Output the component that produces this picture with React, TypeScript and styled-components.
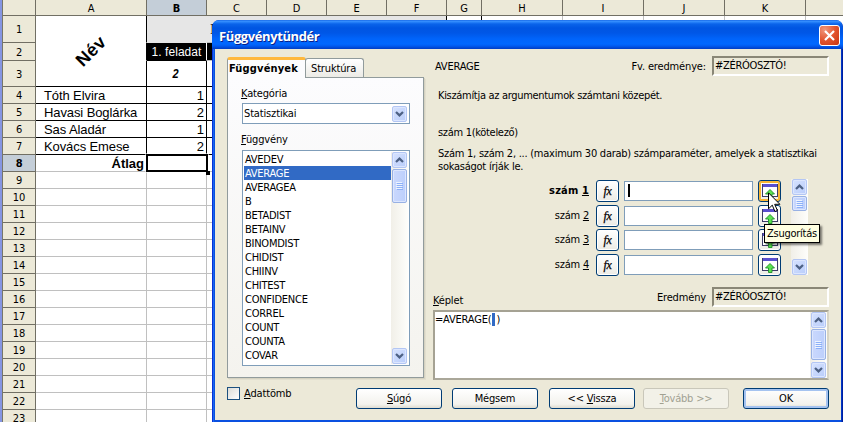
import React from "react";
import styled, { createGlobalStyle, css } from "styled-components";

const Global = createGlobalStyle`
  *, *::before, *::after { box-sizing: border-box; }
  body { margin: 0; background: #fff; overflow: hidden; }
`;

const ui = `"DejaVu Sans Condensed", "DejaVu Sans", sans-serif`;

const Screen = styled.div`
  position: relative;
  width: 843px;
  height: 422px;
  overflow: hidden;
  background: #fff;
  font: 11px/14px ${ui};
  font-stretch: condensed;
  letter-spacing: -0.15px;
  color: #000;
  white-space: nowrap;
`;

/* ---------- Spreadsheet ---------- */

const Sheet = styled.div`
  width: 900px;
  border-left: 2px solid #8595e2;
  box-shadow: inset 1px 0 #77776a;
  padding-left: 1px;
`;

const SheetRow = styled.div<{ $h: number }>`
  display: flex;
  height: ${(p) => p.$h}px;
`;

const Head = styled.div<{ $w: number; $on?: boolean; $top?: boolean }>`
  flex: none;
  display: flex;
  align-items: center;
  justify-content: center;
  width: ${(p) => p.$w}px;
  padding-top: ${(p) => (p.$top ? 3 : 2)}px;
  border-right: 1px solid #716f64;
  border-bottom: 1px solid #716f64;
  background: ${(p) => (p.$on ? "#c4ced8" : "#ece9d8")};
  font-weight: ${(p) => (p.$on ? 700 : 400)};
`;

const Cell = styled.div<{
  $w: number;
  $bg?: string;
  $right?: string;
  $bottom?: string;
  $align?: string;
  $bold?: boolean;
}>`
  flex: none;
  display: flex;
  align-items: center;
  justify-content: ${(p) => p.$align ?? "flex-start"};
  width: ${(p) => p.$w}px;
  padding-right: ${(p) => (p.$align === "flex-end" ? 2 : 0)}px;
  border-right: 1px solid ${(p) => p.$right ?? "#c0c0c0"};
  border-bottom: 1px solid ${(p) => p.$bottom ?? "#c0c0c0"};
  background: ${(p) => p.$bg ?? "#fff"};
  color: ${(p) => (p.$bg === "#000" ? "#fff" : "#000")};
  font: ${(p) => (p.$bold ? 700 : 400)} 13px/15px "Liberation Sans", Arial, sans-serif;
  letter-spacing: 0;
`;

const NameText = styled.span`
  padding-left: 8px;
  letter-spacing: -0.1px;
`;
const HeadText = styled.span`
  font-size: 12px;
  padding-top: 2px;
  letter-spacing: 0.05px;
`;
const Weight = styled.span`
  padding-right: 1px;
  font: italic 700 13px "Liberation Sans", sans-serif;
  transform: scaleX(0.85);
`;
const Serif = styled.span`
  padding: 0 0 0 3px;
  font: 15px "Liberation Serif", serif;
`;
const Rotated = styled.span`
  position: absolute;
  left: 70px;
  top: 40px;
  width: 42px;
  text-align: center;
  font: 700 18px/22px "Liberation Sans", Arial, sans-serif;
  letter-spacing: 0.5px;
  transform: rotate(-45deg);
`;
const Selection = styled.div`
  position: absolute;
  left: 146px;
  top: 154px;
  width: 62px;
  height: 18px;
  border: 2px solid #000;
  outline: 1px solid rgba(255, 255, 255, 0.55);
  &::after {
    content: "";
    position: absolute;
    right: -4px;
    bottom: -5px;
    width: 4px;
    height: 4px;
    background: #000;
  }
`;

/* ---------- Dialog frame ---------- */

const Dialog = styled.section`
  position: absolute;
  left: 212px;
  top: 20px;
  width: 631px;
  height: 402px;
  display: flex;
  flex-direction: column;
  border-radius: 7px 7px 0 0;
  overflow: hidden;
  background: linear-gradient(90deg, #0831d9 0 1px, #1767ee 1px 2px, #0a50e0 2px 628px, #0050e8 629px, #001ea0 630px);
`;

const TitleBar = styled.header`
  display: flex;
  align-items: center;
  justify-content: space-between;
  height: 29px;
  flex: none;
  padding: 2px 3px 0 7px;
  border-radius: 7px 7px 0 0;
  background: linear-gradient(
    180deg,
    #0a5be0 0,
    #3c93ff 1px,
    #2a85fb 2px,
    #0a63ea 4px,
    #0055e2 8px,
    #0057e7 13px,
    #0064fb 19px,
    #0068ff 24px,
    #005bf0 26px,
    #0046d2 28px,
    #003ec4 29px
  );
`;
const Title = styled.h1`
  margin: 0;
  color: #fff;
  font: 700 13px/20px "Open Sans", sans-serif;
  letter-spacing: -0.4px;
  text-shadow: 1px 1px #0a1f8a;
`;
const CloseButton = styled.button`
  display: grid;
  place-items: center;
  width: 21px;
  height: 21px;
  padding: 0;
  border: 1px solid #fff;
  border-radius: 3px;
  background: radial-gradient(circle at 25% 20%, #f0977c, #e2552f 50%, #c93410);
`;
const Body = styled.div`
  flex: 1;
  margin: 0 2px 2px 3px;
  background: #ece9d8;
`;
const Columns = styled.div`
  display: flex;
  height: 332px;
`;

/* ---------- Left column ---------- */

const Left = styled.div`
  flex: none;
  width: 197px;
  margin: 8px 0 0 12px;
`;
const Tabs = styled.div`
  display: flex;
  align-items: flex-end;
  height: 21px;
  margin-bottom: -1px;
  position: relative;
`;
const Tab = styled.div<{ $active?: boolean }>`
  border: 1px solid #919b9c;
  border-bottom: 0;
  border-radius: 3px 3px 0 0;
  ${(p) =>
    p.$active
      ? css`
          width: 79px;
          height: 21px;
          padding: 2px 0 0 1px;
          border-top: 3px solid #ffb83c;
          background: #fcfcfe;
          font-weight: 700;
          letter-spacing: 0.15px;
        `
      : css`
          width: 59px;
          height: 19px;
          margin-left: -1px;
          margin-bottom: 1px;
          padding: 3px 0 0 5px;
          background: linear-gradient(#fff, #ecebe6);
        `}
`;
const TabPanel = styled.div`
  height: 301px;
  padding: 9px 0 0 14px;
  border: 1px solid #919b9c;
  background: linear-gradient(#fcfcfe, #f4f3ee);
  box-shadow: 1px 1px #d5d2c1, 2px 2px #e2dfcf;
`;
const FieldLabel = styled.div<{ $gap?: number }>`
  height: 14px;
  margin-top: ${(p) => p.$gap ?? 0}px;
  margin-left: -1px;
`;
const Select = styled.div`
  display: flex;
  align-items: center;
  justify-content: space-between;
  width: 168px;
  height: 21px;
  margin-top: 2px;
  padding: 1px 2px 1px 1px;
  border: 1px solid #7f9db9;
  background: #fff;
`;
const List = styled.div`
  display: flex;
  width: 168px;
  height: 216px;
  margin-top: 3px;
  padding: 1px;
  border: 1px solid #7f9db9;
  background: #fff;
`;
const Items = styled.div`
  flex: 1;
`;
const Item = styled.div<{ $on?: boolean }>`
  height: 14px;
  padding-left: 1px;
  line-height: 15px;
  letter-spacing: -0.25px;
  background: ${(p) => (p.$on ? "#316ac5" : "transparent")};
  color: ${(p) => (p.$on ? "#fff" : "#000")};
`;

/* ---------- Scroll bar ---------- */

const Track = styled.div`
  display: flex;
  flex-direction: column;
  justify-content: space-between;
  width: 17px;
  height: 100%;
  padding: 0 1px;
  background: linear-gradient(90deg, #f1efe8, #fefefb);
`;
const blue = css`
  display: grid;
  place-items: center;
  border: 1px solid #b3c6f4;
  border-radius: 2px;
  box-shadow: inset 0 0 0 1px #dce6fe;
  background: linear-gradient(135deg, #d6e2fe, #b9cdfb);
`;
const Arrow = styled.div`
  ${blue}
  flex: none;
  width: 15px;
  height: 16px;
`;
const Thumb = styled.div<{ $h: number }>`
  ${blue}
  height: ${(p) => p.$h}px;
  margin-top: 1px;
  border-color: #98b1e4;
  background: linear-gradient(90deg, #cad8fd, #bccffc);
`;

const Chevron = ({ up }: { up?: boolean }) => (
  <svg width="9" height="6" viewBox="0 0 9 6">
    <path d={up ? "M1 5 4.5 1.6 8 5" : "M1 1 4.5 4.4 8 1"} fill="none" stroke="#4d6185" strokeWidth="2.2" />
  </svg>
);

const Grip = () => (
  <svg width="7" height="8" viewBox="0 0 7 8" shapeRendering="crispEdges">
    <path d="M0 .5h6M0 2.5h6M0 4.5h6M0 6.5h6" stroke="#eef4fe" />
    <path d="M1 1.5h6M1 3.5h6M1 5.5h6M1 7.5h6" stroke="#8cb0f8" />
  </svg>
);

const ScrollBar = ({ thumb }: { thumb: number }) => (
  <Track>
    <div>
      <Arrow>
        <Chevron up />
      </Arrow>
      <Thumb $h={thumb}>
        <Grip />
      </Thumb>
    </div>
    <Arrow>
      <Chevron />
    </Arrow>
  </Track>
);

/* ---------- Right column ---------- */

const Right = styled.div`
  width: 396px;
  margin: 7px 0 0 9px;
`;
const ResultLine = styled.div<{ $gap?: number }>`
  display: flex;
  align-items: center;
  height: 20px;
  margin-top: ${(p) => p.$gap ?? 0}px;
`;
const ResultLabel = styled.span`
  margin: 1px 6px 0 auto;
`;
const Result = styled.div`
  width: 117px;
  height: 20px;
  padding: 1px 0 0 1px;
  border: 2px solid;
  border-color: #8a8777 #fff #fff #8a8777;
  letter-spacing: -0.3px;
`;
const FunctionName = styled.span`
  padding: 1px 0 0 2px;
  letter-spacing: -0.2px;
`;
const FormulaLabel = styled.span`
  margin-top: 7px;
`;
const Text = styled.p<{ $gap: number; $ls?: number }>`
  margin: ${(p) => p.$gap}px 0 0 5px;
  line-height: 13px;
  letter-spacing: ${(p) => p.$ls ?? -0.25}px;
`;
const Arguments = styled.div`
  display: flex;
  height: 96px;
  margin-top: 6px;
`;
const ArgumentRows = styled.div`
  display: grid;
  grid-template-rows: 25px 24px 25px 22px;
  align-items: start;
  width: 348px;
  margin: 1px 10px 0 0;
`;
const Argument = styled.div`
  display: flex;
  height: 22px;
`;
const ArgumentName = styled.span<{ $bold?: boolean }>`
  width: 156px;
  margin: 4px 7px 0 0;
  text-align: right;
  font-weight: ${(p) => (p.$bold ? 700 : 400)};
  letter-spacing: ${(p) => (p.$bold ? 0.15 : -0.2)}px;
`;
const SquareButton = styled.button<{ $hot?: boolean }>`
  display: grid;
  place-items: center;
  flex: none;
  width: 23px;
  height: 22px;
  padding: 0;
  border: 1px solid #003c74;
  border-radius: 3px;
  background: linear-gradient(#fff, #ecebe5);
  box-shadow: ${(p) => (p.$hot ? "inset 0 0 0 2px #f8b636" : "inset 0 0 0 1px #fff")};
  color: #000;
  font: italic 12px/12px "Liberation Serif", serif;
  letter-spacing: -0.3px;
  -webkit-text-stroke: 0.25px #000;
`;
const Input = styled.div`
  width: 129px;
  height: 20px;
  margin: 1px 5px 0;
  padding: 2px 0 0 3px;
  border: 1px solid #7f9db9;
  background: #fff;
`;
const Caret = styled.div`
  width: 2px;
  height: 13px;
  background: #000;
`;
const FormulaBox = styled.div`
  display: flex;
  justify-content: space-between;
  height: 70px;
  margin-top: 3px;
  border: 2px solid;
  border-color: #a5a293 #d8d5c5 #aaa799 #a5a293;
  background: #fff;
`;
const Formula = styled.div`
  display: flex;
  padding-top: 1px;
  letter-spacing: -0.2px;
`;
const Mark = styled.span`
  width: 3px;
  height: 13px;
  margin: 0 1px;
  background: #316ac5;
`;

/* ---------- Footer ---------- */

const Footer = styled.footer`
  display: flex;
  height: 28px;
  padding: 6px 0 0 12px;
`;
const CheckBox = styled.div`
  width: 13px;
  height: 13px;
  border: 1px solid #1c5180;
  background: linear-gradient(135deg, #dcdcd7, #fff);
`;
const CheckLabel = styled.span`
  width: 112px;
  margin-left: 4px;
`;
const Button = styled.button<{ $gap?: number; $disabled?: boolean; $primary?: boolean }>`
  flex: none;
  width: 86px;
  height: 21px;
  margin: 1px 0 0 ${(p) => p.$gap ?? 0}px;
  padding: 0;
  border: 1px solid ${(p) => (p.$disabled ? "#c9c7ba" : "#003c74")};
  border-radius: 3px;
  background: ${(p) => (p.$disabled ? "#f2f1e8" : "linear-gradient(#fff, #f3f2ed 80%, #dfdcd0)")};
  box-shadow: ${(p) => (p.$primary ? "inset 0 0 0 2px #a5c3f0" : "none")};
  color: ${(p) => (p.$disabled ? "#a1a192" : "#000")};
  font: 11px/14px ${ui};
  font-stretch: condensed;
  letter-spacing: -0.2px;
`;

/* ---------- Overlays ---------- */

const Tooltip = styled.div`
  position: absolute;
  left: 764px;
  top: 224px;
  width: 56px;
  height: 19px;
  padding: 2px 0 0 2px;
  border: 1px solid #000;
  background: #ffffe1;
  box-shadow: 2px 2px 2px rgba(0, 0, 0, 0.5);
  letter-spacing: -0.25px;
`;
const Pointer = styled.svg`
  position: absolute;
  left: 768px;
  top: 192px;
`;

const ShrinkIcon = () => (
  <svg width="16" height="16" viewBox="0 0 16 16" shapeRendering="crispEdges">
    <path d="M.5 1.5h15v12H.5z" fill="#fff" stroke="#3c3c66" />
    <path d="M1 1h14v3H1z" fill="#5a4fcf" />
    <path
      d="M8 6.5 12.500 11H10v4.500H6.500V11H3.500z"
      fill="#5be34f"
      stroke="#1f8c2a"
      strokeWidth=".9"
      shapeRendering="auto"
    />
  </svg>
);

const columns: [string, number][] = [
  ["C", 60],
  ["D", 60],
  ["E", 60],
  ["F", 60],
  ["G", 35],
  ["H", 81],
  ["I", 81],
  ["J", 81],
  ["K", 81],
  ["", 81],
];
const people: [string, number][] = [
  ["Tóth Elvira", 1],
  ["Havasi Boglárka", 2],
  ["Sas Aladár", 1],
  ["Kovács Emese", 2],
];
const functions = [
  "AVEDEV", "AVERAGE", "AVERAGEA", "B", "BETADIST", "BETAINV", "BINOMDIST", "CHIDIST",
  "CHIINV", "CHITEST", "CONFIDENCE", "CORREL", "COUNT", "COUNTA", "COVAR",
];
const emptyRows = Array.from({ length: 15 }, (_, i) => i + 9);

const Spreadsheet = () => (
  <Sheet>
    <SheetRow $h={16}>
      <Head $w={33} />
      <Head $w={111} $top>A</Head>
      <Head $w={60} $top $on>B</Head>
      {columns.map(([name, w]) => (
        <Head key={name} $w={w} $top>{name}</Head>
      ))}
    </SheetRow>
    <SheetRow $h={27}>
      <Head $w={33}>1</Head>
      <Cell $w={111} $right="#000" $bottom="#fff" />
      <Cell $w={60} $bg="#e6e6e6" $right="#e6e6e6" $bottom="#e6e6e6" />
      <Cell $w={240} $bg="#e6e6e6" $right="#000"><Serif>I</Serif></Cell>
      <Cell $w={35} $right="#000" />
      {columns.slice(5).map(([name, w]) => <Cell key={name} $w={w} />)}
    </SheetRow>
    <SheetRow $h={18}>
      <Head $w={33}>2</Head>
      <Cell $w={111} $right="#000" $bottom="#fff" />
      <Cell $w={60} $bg="#000" $right="#fff" $bottom="#000" $align="center"><HeadText>1. feladat</HeadText></Cell>
      <Cell $w={60} $bg="#000" />
    </SheetRow>
    <SheetRow $h={26}>
      <Head $w={33}>3</Head>
      <Cell $w={111} $right="#000" $bottom="#000" />
      <Cell $w={60} $right="#000" $bottom="#000" $align="center"><Weight>2</Weight></Cell>
      <Cell $w={60} $bottom="#000" />
    </SheetRow>
    {people.map(([name, value], i) => (
      <SheetRow $h={17} key={name}>
        <Head $w={33}>{i + 4}</Head>
        <Cell $w={111} $right="#000" $bottom="#000"><NameText>{name}</NameText></Cell>
        <Cell $w={60} $right="#000" $bottom="#000" $align="flex-end">{value}</Cell>
        <Cell $w={60} $bottom="#000" />
      </SheetRow>
    ))}
    <SheetRow $h={17}>
      <Head $w={33} $on>8</Head>
      <Cell $w={111} $align="flex-end" $bold>Átlag</Cell>
      <Cell $w={60} />
      <Cell $w={60} />
    </SheetRow>
    {emptyRows.map((n) => (
      <SheetRow $h={17} key={n}>
        <Head $w={33}>{n}</Head>
        <Cell $w={111} />
        <Cell $w={60} />
        <Cell $w={60} />
      </SheetRow>
    ))}
    <Rotated>Név</Rotated>
    <Selection />
  </Sheet>
);

export default function App() {
  return (
    <Screen>
      <Global />
      <Spreadsheet />
      <Dialog>
        <TitleBar>
          <Title>Függvénytündér</Title>
          <CloseButton>
            <svg width="13" height="13" viewBox="0 0 13 13">
              <path d="M2 2l9 9M11 2l-9 9" stroke="#fff" strokeWidth="2.2" />
            </svg>
          </CloseButton>
        </TitleBar>
        <Body>
          <Columns>
            <Left>
              <Tabs>
                <Tab $active>Függvények</Tab>
                <Tab>Struktúra</Tab>
              </Tabs>
              <TabPanel>
                <FieldLabel><u>K</u>ategória</FieldLabel>
                <Select>
                  Statisztikai
                  <Arrow><Chevron /></Arrow>
                </Select>
                <FieldLabel $gap={9}><u>F</u>üggvény</FieldLabel>
                <List>
                  <Items>
                    {functions.map((f) => (
                      <Item key={f} $on={f === "AVERAGE"}>{f}</Item>
                    ))}
                  </Items>
                  <ScrollBar thumb={34} />
                </List>
              </TabPanel>
            </Left>
            <Right>
              <ResultLine>
                <FunctionName>AVERAGE</FunctionName>
                <ResultLabel>Fv. eredménye:</ResultLabel>
                <Result>#ZÉRÓOSZTÓ!</Result>
              </ResultLine>
              <Text $gap={13} $ls={-0.31}>Kiszámítja az argumentumok számtani közepét.</Text>
              <Text $gap={24} $ls={-0.3}>szám 1(kötelező)</Text>
              <Text $gap={8}>
                Szám 1, szám 2, ... (maximum 30 darab) számparaméter, amelyek a statisztikai
                <br />
                sokaságot írják le.
              </Text>
              <Arguments>
                <ArgumentRows>
                  {[1, 2, 3, 4].map((n) => (
                    <Argument key={n}>
                      <ArgumentName $bold={n === 1}>szám <u>{n}</u></ArgumentName>
                      <SquareButton>fx</SquareButton>
                      <Input>{n === 1 && <Caret />}</Input>
                      <SquareButton $hot={n === 1}><ShrinkIcon /></SquareButton>
                    </Argument>
                  ))}
                </ArgumentRows>
                <ScrollBar thumb={15} />
              </Arguments>
              <ResultLine $gap={12}>
                <FormulaLabel><u>K</u>éplet</FormulaLabel>
                <ResultLabel>Eredmény</ResultLabel>
                <Result>#ZÉRÓOSZTÓ!</Result>
              </ResultLine>
              <FormulaBox>
                <Formula>=AVERAGE(<Mark />)</Formula>
                <ScrollBar thumb={31} />
              </FormulaBox>
            </Right>
          </Columns>
          <Footer>
            <CheckBox />
            <CheckLabel><u>A</u>dattömb</CheckLabel>
            <Button><u>S</u>úgó</Button>
            <Button $gap={10}>Mégsem</Button>
            <Button $gap={11}>&lt;&lt; <u>V</u>issza</Button>
            <Button $gap={8} $disabled><u>T</u>ovább &gt;&gt;</Button>
            <Button $gap={14} $primary>OK</Button>
          </Footer>
        </Body>
      </Dialog>
      <Tooltip>Zsugorítás</Tooltip>
      <Pointer width="13" height="21" viewBox="0 0 13 21">
        <path d="M.5.8v16l3.800-3.600 2.600 6.300 2.500-1-2.700-6.200h5.200z" fill="#fff" stroke="#000" />
      </Pointer>
    </Screen>
  );
}
